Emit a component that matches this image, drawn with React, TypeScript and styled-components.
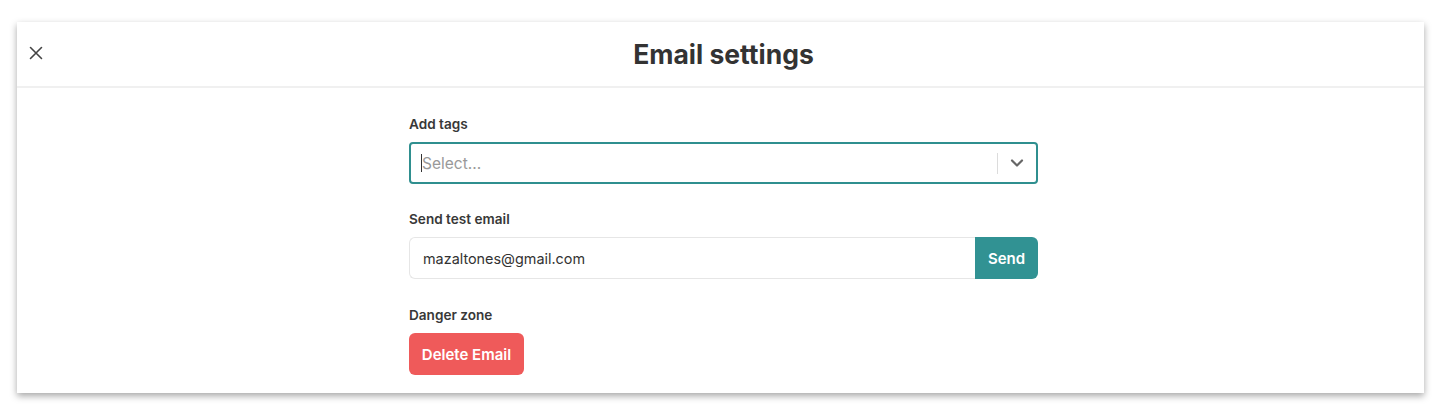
import React from "react";
import styled, { createGlobalStyle } from "styled-components";

const Global = createGlobalStyle`
  html, body { margin: 0; padding: 0; background: #ffffff; }
  body { font-family: Inter, "Noto Sans", Arial, sans-serif; color: #333; }
  * { box-sizing: border-box; }
`;

const Page = styled.div`
  padding: 22px 22px 19px 17px;
`;

const Panel = styled.div`
  background: #fff;
  box-shadow: 0 3px 7px rgba(0, 0, 0, 0.35);
  display: flex;
  flex-direction: column;
`;

const Header = styled.div`
  height: 66px;
  border-bottom: 2px solid #f0f0f0;
  display: grid;
  grid-template-columns: 60px 1fr 60px;
  align-items: center;
`;

const CloseButton = styled.button`
  border: none;
  background: none;
  padding: 0;
  margin-left: 12px;
  margin-bottom: 2px;
  width: 14px;
  height: 14px;
  display: flex;
  align-items: center;
  justify-content: center;
  cursor: pointer;
  color: #444;
`;

const Title = styled.h1`
  margin: 0;
  text-align: center;
  font-size: 26.5px;
  font-weight: 700;
  color: #333;
  padding-left: 6px;
`;

const Body = styled.div`
  padding: 28px 0 18px 6px;
`;

const Form = styled.div`
  width: 629px;
  margin: 0 auto;
  display: flex;
  flex-direction: column;
`;

const Label = styled.div<{ $top?: number }>`
  font-size: 13.6px;
  font-weight: 600;
  line-height: 16px;
  color: #383838;
  margin-top: ${(p) => p.$top ?? 0}px;
  margin-bottom: 10px;
`;

const SelectBox = styled.div`
  height: 42px;
  border: 2px solid #2f8f8f;
  border-radius: 4px;
  display: flex;
  align-items: center;
`;

const SelectValue = styled.div`
  flex: 1;
  padding-left: 10px;
  font-size: 15.5px;
  color: #999;
  display: flex;
  align-items: center;
`;

const Caret = styled.span`
  display: inline-block;
  width: 1px;
  height: 18px;
  background: #333;
`;

const Separator = styled.span`
  width: 1px;
  height: 21px;
  background: #dcdcdc;
`;

const Indicator = styled.div`
  width: 38px;
  display: flex;
  align-items: center;
  justify-content: center;
  color: #666;
`;

const InputRow = styled.div`
  display: flex;
  height: 42px;
`;

const TextInput = styled.div`
  flex: 1;
  border: 1px solid #e6e6e6;
  border-right: none;
  border-radius: 6px 0 0 6px;
  padding-left: 13px;
  display: flex;
  align-items: center;
  font-size: 14.4px;
  color: #333;
`;

const SendButton = styled.button`
  width: 63px;
  border: none;
  background: #319293;
  color: #fff;
  font-family: inherit;
  font-size: 15px;
  font-weight: 600;
  border-radius: 0 6px 6px 0;
  cursor: pointer;
`;

const DeleteButton = styled.button`
  align-self: flex-start;
  width: 115px;
  height: 42px;
  border: none;
  border-radius: 6px;
  background: #ef5a5a;
  color: #fff;
  font-family: inherit;
  font-size: 15px;
  font-weight: 600;
  cursor: pointer;
`;

export default function App() {
  return (
    <>
      <Global />
      <Page>
        <Panel>
          <Header>
            <CloseButton aria-label="Close">
              <svg width="14" height="14" viewBox="0 0 14 14">
                <path d="M1.5 1.5 L12.5 12.5 M12.5 1.5 L1.5 12.5" stroke="#444" strokeWidth="1.6" strokeLinecap="round" />
              </svg>
            </CloseButton>
            <Title>Email settings</Title>
            <div />
          </Header>
          <Body>
            <Form>
              <Label>Add tags</Label>
              <SelectBox>
                <SelectValue>
                  <Caret />
                  Select...
                </SelectValue>
                <Separator />
                <Indicator>
                  <svg width="14" height="10" viewBox="0 0 14 10">
                    <path d="M2 2.5 L7 7.5 L12 2.5" stroke="#666" strokeWidth="2.2" fill="none" strokeLinecap="round" strokeLinejoin="round" />
                  </svg>
                </Indicator>
              </SelectBox>
              <Label $top={27}>Send test email</Label>
              <InputRow>
                <TextInput>mazaltones@gmail.com</TextInput>
                <SendButton>Send</SendButton>
              </InputRow>
              <Label $top={28}>Danger zone</Label>
              <DeleteButton>Delete Email</DeleteButton>
            </Form>
          </Body>
        </Panel>
      </Page>
    </>
  );
}
